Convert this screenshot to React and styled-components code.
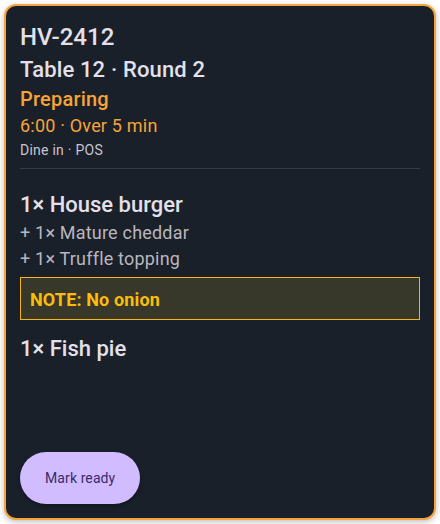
import styled, { createGlobalStyle } from "styled-components";

const GlobalStyle = createGlobalStyle`
  html, body {
    margin: 0;
    padding: 0;
    background: #ffffff;
  }
  body {
    font-family: Roboto, "Liberation Sans", sans-serif;
  }
`;

const ticket = {
  code: "HV-2412",
  table: "Table 12 · Round 2",
  status: "Preparing",
  timer: "6:00 · Over 5 min",
  source: "Dine in · POS",
  items: [
    {
      name: "1× House burger",
      mods: ["+ 1× Mature cheddar", "+ 1× Truffle topping"],
      note: "NOTE: No onion",
    },
    { name: "1× Fish pie", mods: [] },
  ],
};

const Page = styled.div`
  height: 524px;
  padding: 4px;
  box-sizing: border-box;
  display: flex;
`;

const Card = styled.div`
  flex: 1;
  display: flex;
  flex-direction: column;
  padding: 13px 14px 14px;
  border: 2px solid #f5a33a;
  border-radius: 12px;
  background: #19202a;
  box-shadow: 0 2px 6px rgba(0, 0, 0, 0.25);
`;

const Header = styled.div`
  display: flex;
  flex-direction: column;
  padding-bottom: 7px;
  border-bottom: 1px solid #343b46;
`;

const Code = styled.div`
  font-size: 24px;
  font-weight: 500;
  line-height: 36px;
  color: #e4e0ea;
`;

const TableLine = styled.div`
  font-size: 22px;
  font-weight: 500;
  line-height: 30px;
  letter-spacing: 0.15px;
  color: #e4e0ea;
`;

const Status = styled.div`
  margin-top: 2px;
  font-size: 20px;
  font-weight: 500;
  line-height: 24px;
  letter-spacing: 0.2px;
  color: #f7a436;
`;

const Timer = styled.div`
  margin-top: 2px;
  font-size: 18px;
  line-height: 26px;
  letter-spacing: 0.2px;
  color: #f7a436;
`;

const Source = styled.div`
  font-size: 14px;
  line-height: 22px;
  letter-spacing: 0.25px;
  color: #c8c4cf;
`;

const Items = styled.div`
  display: flex;
  flex-direction: column;
  padding-top: 21px;
`;

const Item = styled.div`
  display: flex;
  flex-direction: column;
  margin-bottom: 14px;
`;

const ItemName = styled.div`
  font-size: 22px;
  font-weight: 500;
  line-height: 30px;
  color: #e4e0ea;
`;

const Mod = styled.div`
  font-size: 18px;
  line-height: 26px;
  letter-spacing: 0.2px;
  color: #b9b6bf;
`;

const Note = styled.div`
  margin-top: 5px;
  padding: 2px 9px 0;
  height: 43px;
  box-sizing: border-box;
  display: flex;
  align-items: center;
  border: 1px solid #f7b414;
  background: #37372a;
  color: #fbbd0c;
  font-size: 18px;
  font-weight: 700;
  letter-spacing: 0.15px;
`;

const Footer = styled.div`
  margin-top: auto;
  display: flex;
`;

const ReadyButton = styled.button`
  height: 52px;
  padding: 0 25px;
  border: none;
  border-radius: 26px;
  background: #d0bcfe;
  color: #3b2a6e;
  font-family: Roboto, "Liberation Sans", sans-serif;
  font-size: 14px;
  letter-spacing: 0.1px;
  box-shadow: 0 2px 4px rgba(0, 0, 0, 0.3);
  cursor: pointer;
`;

export default function App() {
  return (
    <>
      <GlobalStyle />
      <Page>
        <Card>
          <Header>
            <Code>{ticket.code}</Code>
            <TableLine>{ticket.table}</TableLine>
            <Status>{ticket.status}</Status>
            <Timer>{ticket.timer}</Timer>
            <Source>{ticket.source}</Source>
          </Header>
          <Items>
            {ticket.items.map((item) => (
              <Item key={item.name}>
                <ItemName>{item.name}</ItemName>
                {item.mods.map((m) => (
                  <Mod key={m}>{m}</Mod>
                ))}
                {item.note && <Note>{item.note}</Note>}
              </Item>
            ))}
          </Items>
          <Footer>
            <ReadyButton>Mark ready</ReadyButton>
          </Footer>
        </Card>
      </Page>
    </>
  );
}
